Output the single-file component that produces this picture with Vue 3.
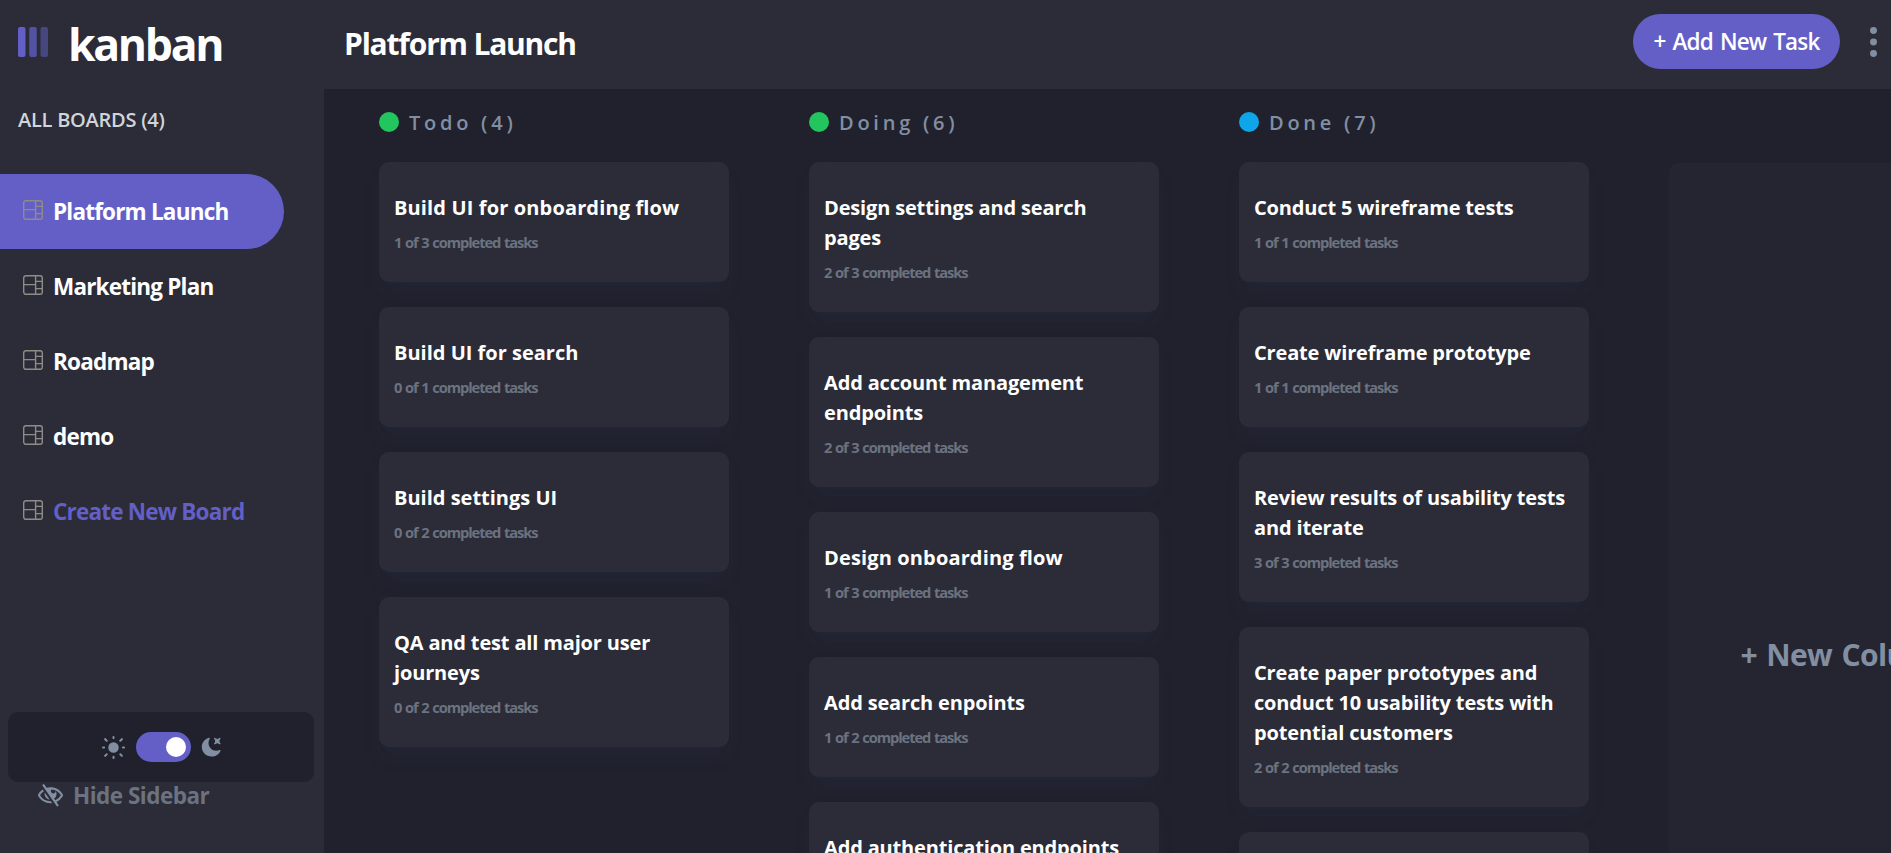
<script setup>
const boards = [
  { name: 'Platform Launch', active: true },
  { name: 'Marketing Plan' },
  { name: 'Roadmap' },
  { name: 'demo' },
  { name: 'Create New Board', create: true }
]

const columns = [
  {
    name: 'Todo', count: 4, tone: 'green',
    tasks: [
      { lines: ['Build UI for onboarding flow'], done: 1, total: 3, fit: 'loose' },
      { lines: ['Build UI for search'], done: 0, total: 1, fit: 'normal' },
      { lines: ['Build settings UI'], done: 0, total: 2, fit: 'normal' },
      { lines: ['QA and test all major user', 'journeys'], done: 0, total: 2 }
    ]
  },
  {
    name: 'Doing', count: 6, tone: 'green',
    tasks: [
      { lines: ['Design settings and search', 'pages'], done: 2, total: 3 },
      { lines: ['Add account management', 'endpoints'], done: 2, total: 3 },
      { lines: ['Design onboarding flow'], done: 1, total: 3, fit: 'loose' },
      { lines: ['Add search enpoints'], done: 1, total: 2 },
      { lines: ['Add authentication endpoints'], done: 1, total: 2 }
    ]
  },
  {
    name: 'Done', count: 7, tone: 'blue',
    tasks: [
      { lines: ['Conduct 5 wireframe tests'], done: 1, total: 1 },
      { lines: ['Create wireframe prototype'], done: 1, total: 1 },
      { lines: ['Review results of usability tests', 'and iterate'], done: 3, total: 3 },
      { lines: ['Create paper prototypes and', 'conduct 10 usability tests with', 'potential customers'], done: 2, total: 2 },
      { lines: ['Market discovery'], done: 1, total: 1 }
    ]
  }
]
</script>

<template>
  <div class="app">
    <aside class="sidebar">
      <div class="brand">
        <svg class="logo" width="30" height="30" viewBox="0 0 24 24" fill="#635fc7">
          <rect width="6" height="24" rx="1.6" />
          <rect x="9" width="6" height="24" rx="1.6" opacity=".75" />
          <rect x="18" width="6" height="24" rx="1.6" opacity=".5" />
        </svg>
        <span class="brand-name">kanban</span>
      </div>
      <h2 class="boards-title">ALL BOARDS (4)</h2>
      <nav class="boards">
        <a v-for="b in boards" :key="b.name" class="board-link" :class="{ active: b.active, create: b.create }">
          <svg class="board-icon" width="20" height="20" viewBox="0 0 20 20" fill="none" stroke="#8f8b86" stroke-width="1.4">
            <rect x=".7" y=".7" width="18.6" height="18.6" rx="2.2" />
            <path d="M12.6 .7v18.6M.7 9.6h12M12.6 6.4h6.7M12.6 13.6h6.7" />
          </svg>
          <span>{{ b.name }}</span>
        </a>
      </nav>
      <div class="sidebar-foot">
        <div class="theme">
          <svg width="23" height="23" viewBox="0 0 18.33 18.33" fill="#828fa3">
            <path d="M9.167 15.833a.833.833 0 0 1 .833.834v.833a.833.833 0 0 1-1.667 0v-.833a.833.833 0 0 1 .834-.834ZM3.75 13.75a.833.833 0 0 1 .59 1.422l-1.25 1.25a.833.833 0 0 1-1.18-1.178l1.25-1.25a.833.833 0 0 1 .59-.244Zm10.833 0c.221 0 .433.088.59.244l1.25 1.25a.833.833 0 0 1-1.179 1.178l-1.25-1.25a.833.833 0 0 1 .59-1.422ZM9.167 5a4.167 4.167 0 1 1 0 8.334 4.167 4.167 0 0 1 0-8.334Zm-7.5 3.333a.833.833 0 0 1 0 1.667H.833a.833.833 0 1 1 0-1.667h.834Zm15.833 0a.833.833 0 0 1 0 1.667h-.833a.833.833 0 0 1 0-1.667h.833Zm-1.667-6.666a.833.833 0 0 1 .59 1.422l-1.25 1.25a.833.833 0 1 1-1.179-1.178l1.25-1.25a.833.833 0 0 1 .59-.244Zm-13.333 0c.221 0 .433.088.59.244l1.25 1.25a.833.833 0 0 1-1.18 1.178L1.91 3.09a.833.833 0 0 1 .59-1.422ZM9.167 0A.833.833 0 0 1 10 .833v.834a.833.833 0 1 1-1.667 0V.833A.833.833 0 0 1 9.167 0Z" />
          </svg>
          <span class="toggle"><span class="knob"></span></span>
          <svg width="20" height="20" viewBox="0 0 16 16" fill="#828fa3">
            <path d="M6.474.682c.434-.11.718.406.481.78A6.067 6.067 0 0 0 6.01 4.72c0 3.418 2.827 6.187 6.314 6.187.89.002 1.77-.182 2.584-.54.408-.18.894.165.724.57-1.16 2.775-3.944 4.73-7.194 4.73-4.292 0-7.771-3.41-7.771-7.615 0-3.541 2.466-6.518 5.807-7.37Zm8.433.07c.442-.294.969.232.674.674l-.525.787a1.943 1.943 0 0 0 0 2.157l.525.788c.295.441-.232.968-.674.673l-.787-.525a1.943 1.943 0 0 0-2.157 0l-.786.525c-.442.295-.97-.232-.675-.673l.525-.788a1.943 1.943 0 0 0 0-2.157l-.525-.787c-.295-.442.232-.968.674-.673l.787.525a1.943 1.943 0 0 0 2.157 0l.787-.526Z" />
          </svg>
        </div>
        <div class="hide">
          <svg width="25" height="22.5" viewBox="0 0 18 16" fill="#828fa3">
            <path d="M8.522 11.223a4.252 4.252 0 0 1-3.654-5.22l3.654 5.22ZM9 12.25A8.685 8.685 0 0 1 1.5 8a8.612 8.612 0 0 1 2.76-2.864l-.86-1.23A10.112 10.112 0 0 0 .208 7.238a1.5 1.5 0 0 0 0 1.524A10.187 10.187 0 0 0 9 13.75c.414 0 .828-.025 1.239-.074l-1-1.43A8.88 8.88 0 0 1 9 12.25Zm8.792-3.488a10.14 10.14 0 0 1-4.486 4.046l1.504 2.148a.375.375 0 0 1-.092.523l-.648.453a.375.375 0 0 1-.523-.092L3.19 1.044A.375.375 0 0 1 3.282.52L3.93.068a.375.375 0 0 1 .523.092l1.735 2.479A9.52 9.52 0 0 1 9 2.25c3.6 0 6.942 1.902 8.792 4.988a1.5 1.5 0 0 1 0 1.524ZM16.5 8a8.674 8.674 0 0 0-6.755-4.219A1.75 1.75 0 1 0 12.75 5v-.001a4.25 4.25 0 0 1-1.154 5.366l.834 1.192A8.641 8.641 0 0 0 16.5 8Z" />
          </svg>
          <span>Hide Sidebar</span>
        </div>
      </div>
    </aside>

    <div class="main">
      <header class="topbar">
        <h1 class="title">Platform Launch</h1>
        <div class="actions">
          <button class="add">+ Add New Task</button>
          <svg class="dots" width="7" height="30" viewBox="0 0 7 30" fill="#828fa3">
            <circle cx="3.5" cy="3.5" r="3.45" />
            <circle cx="3.5" cy="15" r="3.45" />
            <circle cx="3.5" cy="26.5" r="3.45" />
          </svg>
        </div>
      </header>
      <main class="board">
        <section v-for="c in columns" :key="c.name" class="column">
          <div class="column-head">
            <span class="dot" :class="c.tone"></span>
            <span class="column-name">{{ c.name }} ({{ c.count }})</span>
          </div>
          <article v-for="t in c.tasks" :key="t.lines[0]" class="card">
            <h3 class="card-title" :class="t.fit"><span v-for="l in t.lines" :key="l" class="line">{{ l }}</span></h3>
            <p class="meta">{{ t.done }} of {{ t.total }} completed tasks</p>
          </article>
        </section>
        <section class="new-column"><span>+ New Column</span></section>
      </main>
    </div>
  </div>
</template>

<style>
body { margin: 0; background: #20212c; overflow: hidden; }
</style>

<style scoped>
.app {
  display: flex;
  width: 100vw;
  height: 100vh;
  overflow: hidden;
  background: #20212c;
  color: #fff;
  font-family: "Open Sans", "Noto Sans", sans-serif;
}
h1, h2, h3, p { margin: 0; }

.sidebar {
  flex: none;
  display: flex;
  flex-direction: column;
  width: 324px;
  background: #2b2c37;
}
.brand { display: flex; height: 89px; padding-left: 18px; }
.logo { margin-top: 27px; }
.brand-name {
  margin: 17px 0 0 20px;
  font-size: 44.5px;
  line-height: 54px;
  font-weight: 700;
  letter-spacing: -2.3px;
}
.boards-title {
  margin: 16px 0 39px 18px;
  font-size: 20px;
  line-height: 30px;
  font-weight: 600;
  letter-spacing: -.25px;
  color: #d1d5db;
}
.board-link {
  display: flex;
  box-sizing: border-box;
  width: 284px;
  height: 75px;
  padding-left: 23px;
  border-radius: 0 37.5px 37.5px 0;
  font-size: 22.5px;
  line-height: 75px;
  font-weight: 700;
  letter-spacing: -.8px;
  white-space: nowrap;
}
.board-link.active { background: #635fc7; }
.board-link.create { color: #635fc7; }
.board-icon { flex: none; margin: 26px 10px 0 0; }
.sidebar-foot { margin: auto 10px 36px 8px; }
.theme {
  display: flex;
  align-items: center;
  justify-content: center;
  height: 70px;
  border-radius: 10px;
  background: #20212c;
}
.toggle {
  display: flex;
  align-items: center;
  justify-content: flex-end;
  box-sizing: border-box;
  width: 55px;
  height: 30px;
  margin: 0 10px 0 11px;
  padding-right: 5px;
  border-radius: 15px;
  background: #635fc7;
}
.knob { width: 20px; height: 20px; border-radius: 50%; background: #fff; }
.hide {
  display: flex;
  height: 35px;
  padding-left: 30px;
  gap: 10px;
  font-size: 22.5px;
  line-height: 28px;
  font-weight: 700;
  letter-spacing: -.5px;
  color: #6b7280;
}
.hide svg { margin-top: 2px; }

.main { flex: 1; display: flex; flex-direction: column; min-width: 0; }
.topbar {
  flex: none;
  display: flex;
  justify-content: space-between;
  height: 89px;
  padding: 0 14px 0 20px;
  background: #2b2c37;
}
.title {
  font-size: 30px;
  line-height: 87px;
  font-weight: 700;
  letter-spacing: -1.2px;
}
.actions { display: flex; align-items: flex-start; gap: 30px; }
.add {
  width: 207px;
  height: 55px;
  margin-top: 14px;
  padding: 0;
  border: 0;
  border-radius: 27.5px;
  background: #635fc7;
  color: #fff;
  font: 600 22.5px/56px "Open Sans", sans-serif;
  letter-spacing: -.85px;
  word-spacing: 2px;
}
.dots { margin-top: 27px; }

.board {
  flex: 1;
  display: flex;
  align-items: flex-start;
  gap: 80px;
  min-height: 0;
  padding-left: 55px;
  overflow: hidden;
}
.column { flex: none; display: flex; flex-direction: column; gap: 25px; width: 350px; padding-top: 18px; }
.column-head {
  display: flex;
  align-items: center;
  gap: 10px;
  height: 30px;
  font-size: 20px;
  line-height: 28px;
  font-weight: 600;
  letter-spacing: 3.75px;
  color: #828fa3;
}
.column-name { padding-top: 2px; }
.dot { width: 20px; height: 20px; border-radius: 50%; }
.dot.green { background: #22c55e; }
.dot.blue { background: #0ea5e9; }
.card {
  padding: 31px 15px 30px;
  border-radius: 10px;
  background: #2b2c37;
  box-shadow: 0 12.5px 18.75px -3.75px #364e7e1a, 0 5px 7.5px -5px #364e7e1a;
}
.card-title { font-size: 20px; line-height: 30px; font-weight: 700; letter-spacing: -.16px; }
.card-title.normal { letter-spacing: 0; }
.card-title.loose { letter-spacing: .14px; }
.line { display: block; white-space: nowrap; }
.meta {
  margin-top: 9px;
  font-size: 14.7px;
  line-height: 20px;
  font-weight: 700;
  letter-spacing: -1.08px;
  word-spacing: .9px;
  color: #6b7280;
}
.new-column {
  flex: none;
  display: flex;
  align-items: center;
  justify-content: center;
  box-sizing: border-box;
  width: 350px;
  height: 983px;
  margin-top: 74px;
  padding-left: 6px;
  border-radius: 10px;
  background: linear-gradient(#2b2c3766, #2b2c3755);
  color: #828fa3;
  font-size: 30px;
  font-weight: 700;
  letter-spacing: -.6px;
  word-spacing: 2px;
}
</style>
